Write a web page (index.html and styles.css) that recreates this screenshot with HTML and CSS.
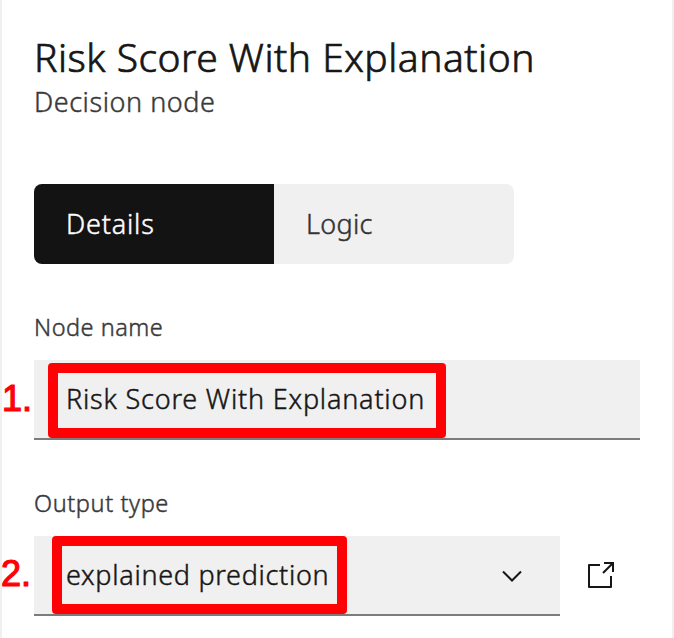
FILE: index.html
```html
<!DOCTYPE html>
<html lang="en">
<head>
<meta charset="utf-8">
<title>Decision node</title>
<link rel="stylesheet" href="styles.css">
</head>
<body>
<main class="panel">
  <h1 class="title">Risk Score With Explanation</h1>
  <p class="subtitle">Decision node</p>
  <div class="tabs">
    <button class="tab selected">Details</button>
    <button class="tab logic">Logic</button>
  </div>
  <div class="label">Node name</div>
  <div class="field">
    <span class="value">Risk Score With Explanation</span>
    <span class="mark mark-name"></span><span class="number first">1.</span>
  </div>
  <div class="label type-label">Output type</div>
  <div class="row">
    <div class="field select">
      <span class="value">explained prediction</span>
      <svg class="chevron" width="20" height="12" viewBox="0 0 20 12"><path d="M1 1.5l9 9 9-9"/></svg>
      <span class="mark mark-type"></span><span class="number">2.</span>
    </div>
    <svg class="launch" width="28" height="28" viewBox="0 0 28 28"><path stroke-linejoin="round" d="M14 3H3v22h22V14"/><path d="M18 1h9v9M27 1L17 11"/></svg>
  </div>
</main>
</body>
</html>
```
FILE: styles.css
```css
* { box-sizing: border-box; }
body { margin: 0; background: #fff; color: #161616; font-family: "Noto Sans", sans-serif; overflow: hidden; }
svg { display: block; overflow: visible; }
.panel { width: 674px; height: 638px; padding: 30px 32px 0; border: solid #f0f0f0; border-width: 0 2px; white-space: nowrap; -webkit-text-stroke: 0.45px currentColor; }
.title, .subtitle { margin: 0; font-weight: 300; }
.title { height: 54px; font-size: 39px; line-height: 54px; letter-spacing: 0.5px; -webkit-text-stroke-width: 0.7px; }
.subtitle { height: 36px; font-size: 27px; line-height: 35px; letter-spacing: 0.55px; color: #393939; }
.tabs { display: flex; width: 480px; height: 80px; margin-top: 64px; border-radius: 8px; overflow: hidden; }
.tab { width: 240px; padding: 0 32px 2px; border: 0; background: #f0f0f0; color: #333; font: 300 27px "Noto Sans", sans-serif; letter-spacing: 0.8px; text-align: left; -webkit-text-stroke: 0.45px currentColor; }
.tab.selected { background: #131313; color: #fff; }
.tab.logic { letter-spacing: 0.3px; }
.label { height: 32px; margin-top: 48px; font-size: 23.5px; line-height: 30px; font-weight: 300; letter-spacing: 0.5px; color: #393939; }
.type-label { letter-spacing: 0.6px; }
.field { position: relative; display: flex; align-items: center; width: 606px; height: 80px; margin-top: 16px; padding: 0 32px; border-bottom: 2px solid #7c7c7c; background: #f0f0f0; font-size: 27px; font-weight: 300; letter-spacing: 0.8px; }
.value { padding-bottom: 2px; }
.row { display: flex; align-items: center; gap: 26px; margin-top: 16px; }
.select { width: 526px; margin: 0; padding-right: 38px; justify-content: space-between; letter-spacing: 0.7px; }
.chevron { margin-top: 2px; }
.chevron path, .launch path { fill: none; stroke: #161616; stroke-width: 2; }
.mark { position: absolute; border: 10px solid #ff0004; border-radius: 4px; }
.mark-name { left: 14px; top: 3px; width: 398px; height: 75px; }
.mark-type { left: 18px; top: 0; width: 295px; height: 78px; }
.number { position: absolute; left: -33px; top: 18px; color: #ff0004; font: 400 36px/40px "Liberation Sans", sans-serif; letter-spacing: 0; -webkit-text-stroke: 1.2px #ff0004; }
.first { left: -32px; top: 19px; }
```
